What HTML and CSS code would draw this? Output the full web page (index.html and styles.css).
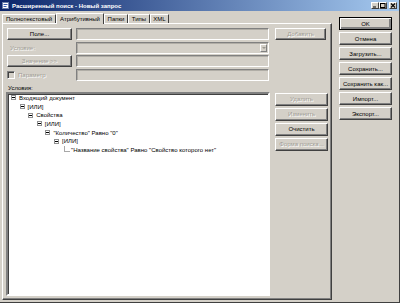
FILE: index.html
```html
<!DOCTYPE html>
<html lang="ru">
<head>
    <meta charset="UTF-8">
    <title>Расширенный поиск - Новый запрос</title>
    <link rel="stylesheet" href="styles.css">
</head>
<body>
    <div class="window">
        <div class="titlebar">
            <svg class="app-icon" width="7" height="7" viewBox="0 0 7 7">
                <rect x="0.5" y="0.5" width="6" height="6" fill="#fff" stroke="#6b7fa8"/>
                <rect x="1.5" y="2" width="4" height="1" fill="#3a5fb0"/>
                <rect x="1.5" y="4" width="3" height="1" fill="#3a5fb0"/>
            </svg>
            <span class="title">Расширенный поиск - Новый запрос</span>
            <div class="caption-buttons">
                <span class="cap"><svg width="6" height="5" viewBox="0 0 6 5"><rect x="1" y="3.5" width="3" height="1" fill="#000"/></svg></span>
                <span class="cap"><svg width="6" height="5" viewBox="0 0 6 5"><rect x="0.5" y="0.5" width="4.5" height="4" fill="none" stroke="#000" stroke-width="1"/></svg></span>
                <span class="cap close"><svg width="6" height="5" viewBox="0 0 6 5"><path d="M1 0.5 L5 4.5 M5 0.5 L1 4.5" stroke="#000" stroke-width="1.1"/></svg></span>
            </div>
        </div>

        <div class="body">
            <div class="left">
                <div class="tabs">
                    <span class="tab t1">Полнотекстовый</span>
                    <span class="tab t2 active">Атрибутивный</span>
                    <span class="tab t3">Папки</span>
                    <span class="tab t4">Типы</span>
                    <span class="tab t5">XML</span>
                </div>
                <div class="panel">
                    <div class="fields">
                        <button class="btn">Поле...</button>
                        <div class="input"></div>
                        <button class="btn" disabled>Добавить</button>

                        <span class="label disabled">Условие:</span>
                        <div class="input combo"><span class="drop"></span></div>
                        <span></span>

                        <button class="btn" disabled>Значение &gt;&gt;</button>
                        <div class="input"></div>
                        <span></span>

                        <span class="check disabled"><span class="box"></span>Параметр</span>
                        <div class="input"></div>
                        <span></span>
                    </div>

                    <div class="cond-label">Условия:</div>

                    <div class="tree-area">
                        <div class="tree">
                            <div class="node lvl0"><span class="toggle"></span>Входящий документ</div>
                            <div class="node lvl1"><span class="toggle"></span>[ИЛИ]</div>
                            <div class="node lvl2"><span class="toggle"></span>Свойства</div>
                            <div class="node lvl3"><span class="toggle"></span>[ИЛИ]</div>
                            <div class="node lvl4"><span class="toggle"></span>"Количество" Равно "0"</div>
                            <div class="node lvl5"><span class="toggle"></span>[ИЛИ]</div>
                            <div class="node leaf"><span class="branch"></span>"Название свойства" Равно "Свойство которого нет"</div>
                        </div>
                        <div class="side-buttons">
                            <button class="btn" disabled>Удалить</button>
                            <button class="btn" disabled>Изменить</button>
                            <button class="btn">Очистить</button>
                            <button class="btn" disabled>Форма поиска...</button>
                        </div>
                    </div>
                </div>
            </div>

            <div class="right">
                <button class="btn default">OK</button>
                <button class="btn">Отмена</button>
                <button class="btn">Загрузить...</button>
                <button class="btn">Сохранить...</button>
                <button class="btn">Сохранить как...</button>
                <button class="btn">Импорт...</button>
                <button class="btn">Экспорт...</button>
            </div>
        </div>
    </div>
</body>
</html>
```

FILE: styles.css
```css
body {
    margin: 0;
    background-color: #d4d0c8;
    font-family: 'Liberation Sans', Arial, sans-serif;
    font-size: 6px;
    color: #000;
}
.window {
    width: 400px;
    height: 303px;
    box-sizing: border-box;
    border-right: 1px solid #404040;
    border-bottom: 1px solid #404040;
    background: #d4d0c8;
    overflow: hidden;
}

/* заголовок окна */
.titlebar {
    height: 11px;
    display: flex;
    align-items: center;
    padding-left: 2px;
    background: linear-gradient(to right, #0a246a, #a6caf0);
}
.app-icon {
    flex: none;
}
.title {
    margin-left: 3px;
    color: #fff;
    font-weight: bold;
    font-size: 6px;
    white-space: nowrap;
}
.caption-buttons {
    margin-left: auto;
    margin-right: 2px;
    display: flex;
}
.cap {
    width: 8px;
    height: 7px;
    box-sizing: border-box;
    background: #d4d0c8;
    border: 1px solid;
    border-color: #fff #404040 #404040 #fff;
    display: flex;
    align-items: center;
    justify-content: center;
}
.cap svg {
    display: block;
}
.cap.close {
    margin-left: 2px;
}

.body {
    display: flex;
}
.left {
    margin-left: 2px;
    width: 330px;
}
.right {
    flex: 1;
    display: flex;
    flex-direction: column;
    gap: 2px;
    padding: 6px 0 0 7px;
}
.right .btn {
    width: 53px;
    height: 13px;
}

/* вкладки */
.tabs {
    display: flex;
    align-items: flex-end;
    height: 12px;
    position: relative;
    z-index: 1;
}
.tab {
    height: 9px;
    line-height: 9px;
    box-sizing: border-box;
    padding: 0 2px;
    text-align: center;
    white-space: nowrap;
    border-top: 1px solid #fff;
    border-left: 1px solid #fff;
    border-right: 1px solid #404040;
}
.t1 { width: 54px; }
.t2 { width: 48px; }
.t3 { width: 24px; }
.t4 { width: 22px; }
.t5 { width: 19px; }
.tab.active {
    height: 11px;
    line-height: 10px;
    margin-bottom: -1px;
    background: #d4d0c8;
}

.panel {
    height: 277px;
    box-sizing: border-box;
    border: 1px solid;
    border-color: #fff #404040 #404040 #fff;
    box-shadow: inset -1px -1px #808080;
    padding: 4px 0 0 4px;
}

/* кнопки */
.btn {
    font-family: inherit;
    font-size: 6px;
    color: #000;
    margin: 0;
    padding: 0;
    height: 12px;
    line-height: 10px;
    background: #d4d0c8;
    border: 1px solid;
    border-color: #fff #404040 #404040 #fff;
    box-shadow: inset -1px -1px #808080;
    white-space: nowrap;
}
.btn:disabled {
    color: #a09d96;
    text-shadow: 1px 1px #fff;
}
.btn.default {
    border: 1px solid #000;
    box-shadow: inset 1px 1px #fff, inset -2px -2px #808080;
}

.fields {
    display: grid;
    grid-template-columns: 65px 193px 53px;
    grid-auto-rows: 12px;
    column-gap: 4px;
    row-gap: 1.5px;
}
.fields > :nth-child(3n) {
    margin-left: 2px;
}
.input {
    box-sizing: border-box;
    border: 1px solid;
    border-color: #808080 #fff #fff #808080;
    box-shadow: inset 1px 1px #b0ada6;
    background: #d4d0c8;
    position: relative;
}
.combo .drop {
    position: absolute;
    right: 1px;
    top: 1px;
    width: 7px;
    height: 8px;
    box-sizing: border-box;
    border: 1px solid;
    border-color: #fff #808080 #808080 #fff;
}
.combo .drop::after {
    content: "";
    position: absolute;
    left: 1px;
    top: 2px;
    border-left: 2px solid transparent;
    border-right: 2px solid transparent;
    border-top: 2px solid #9a978f;
}
.label,
.check {
    display: flex;
    align-items: center;
}
.label {
    padding-left: 3px;
}
.disabled {
    color: #a09d96;
    text-shadow: 1px 1px #fff;
}
.check .box {
    width: 8px;
    height: 8px;
    box-sizing: border-box;
    border: 1px solid;
    border-color: #808080 #fff #fff #808080;
    box-shadow: inset 1px 1px #404040;
    background: #d4d0c8;
    margin-right: 3px;
}

.cond-label {
    margin-top: 4px;
    height: 7px;
    line-height: 7px;
    padding-left: 1px;
}

/* дерево условий */
.tree-area {
    display: flex;
    gap: 5px;
    margin-left: -1px;
}
.tree {
    width: 264px;
    height: 204px;
    box-sizing: border-box;
    background: #fff;
    border: 2px solid;
    border-color: #808080 #fff #fff #808080;
    box-shadow: inset 1px 1px #404040;
    padding: 0 0 0 3px;
}
.node {
    height: 8.7px;
    display: flex;
    align-items: center;
    white-space: nowrap;
}
.toggle {
    width: 5px;
    height: 5px;
    box-sizing: border-box;
    border: 1px solid #909090;
    margin-right: 3px;
    position: relative;
    flex: none;
}
.toggle::after {
    content: "";
    position: absolute;
    left: 0;
    top: 1px;
    width: 3px;
    height: 1px;
    background: #000;
}
.lvl1 { padding-left: 8.6px; }
.lvl2 { padding-left: 17.2px; }
.lvl3 { padding-left: 25.8px; }
.lvl4 { padding-left: 34.4px; }
.lvl5 { padding-left: 43px; }
.leaf {
    padding-left: 53px;
    align-items: flex-start;
    line-height: 8.7px;
}
.branch {
    width: 5px;
    height: 5px;
    border-left: 1px solid #a8a8a8;
    border-bottom: 1px solid #a8a8a8;
    margin-right: 1px;
    flex: none;
}
.side-buttons {
    display: flex;
    flex-direction: column;
    gap: 2px;
    padding-top: 1px;
}
.side-buttons .btn {
    width: 53px;
    height: 13px;
}
```
